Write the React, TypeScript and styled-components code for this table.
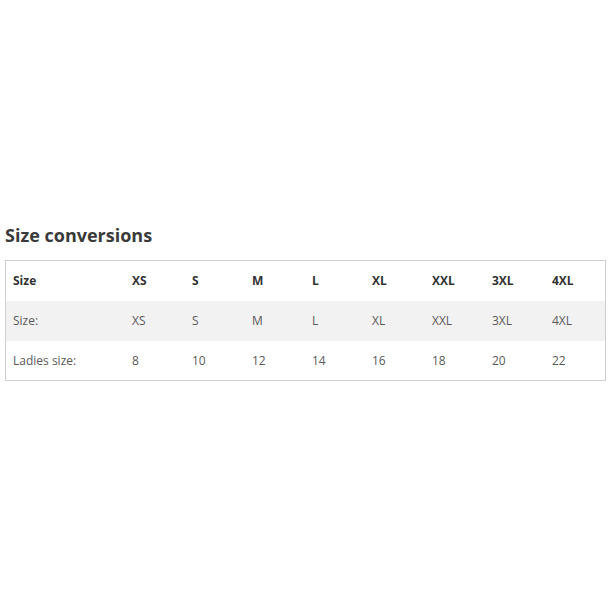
import React from 'react';
import styled, { createGlobalStyle } from 'styled-components';

const sizes = ['XS', 'S', 'M', 'L', 'XL', 'XXL', '3XL', '4XL'];
const ladies = ['8', '10', '12', '14', '16', '18', '20', '22'];

export default function App() {
  return (
    <>
      <GlobalStyle />
      <StyledPage>
        <StyledTitle>Size conversions</StyledTitle>
        <StyledTable>
          <thead>
            <StyledRow>
              <StyledHead $first>Size</StyledHead>
              {sizes.map((s) => (
                <StyledHead key={s}>{s}</StyledHead>
              ))}
            </StyledRow>
          </thead>
          <tbody>
            <StyledRow $shaded>
              <StyledCell>Size:</StyledCell>
              {sizes.map((s) => (
                <StyledCell key={s}>{s}</StyledCell>
              ))}
            </StyledRow>
            <StyledRow>
              <StyledCell>Ladies size:</StyledCell>
              {ladies.map((s) => (
                <StyledCell key={s}>{s}</StyledCell>
              ))}
            </StyledRow>
          </tbody>
        </StyledTable>
      </StyledPage>
    </>
  );
}

const GlobalStyle = createGlobalStyle`
  html, body {
    margin: 0;
    padding: 0;
    background: #fff;
  }
`;

const StyledPage = styled.div`
  width: 610px;
  height: 610px;
  box-sizing: border-box;
  padding: 223px 5px 0 5px;
  font-family: 'Open Sans', sans-serif;
`;

const StyledTitle = styled.h2`
  margin: 0 0 13px 0;
  font-size: 18px;
  line-height: 24px;
  font-weight: 700;
  color: #3a3a3a;
`;

const StyledTable = styled.table`
  width: 601px;
  border-collapse: collapse;
  border: 1px solid #cfcfcf;
  table-layout: fixed;
`;

const StyledRow = styled.tr<{ $shaded?: boolean }>`
  height: 40px;
  background: ${({ $shaded }) => ($shaded ? '#f2f2f2' : '#fff')};
`;

const StyledHead = styled.th<{ $first?: boolean }>`
  width: ${({ $first }) => ($first ? '102px' : '44px')};
  padding: 0 8px 0 7px;
  text-align: left;
  font-size: 12px;
  font-weight: 700;
  color: #333;
`;

const StyledCell = styled.td`
  padding: 0 8px 0 7px;
  text-align: left;
  font-size: 12px;
  font-weight: 400;
  color: #5a5a5a;
`;
